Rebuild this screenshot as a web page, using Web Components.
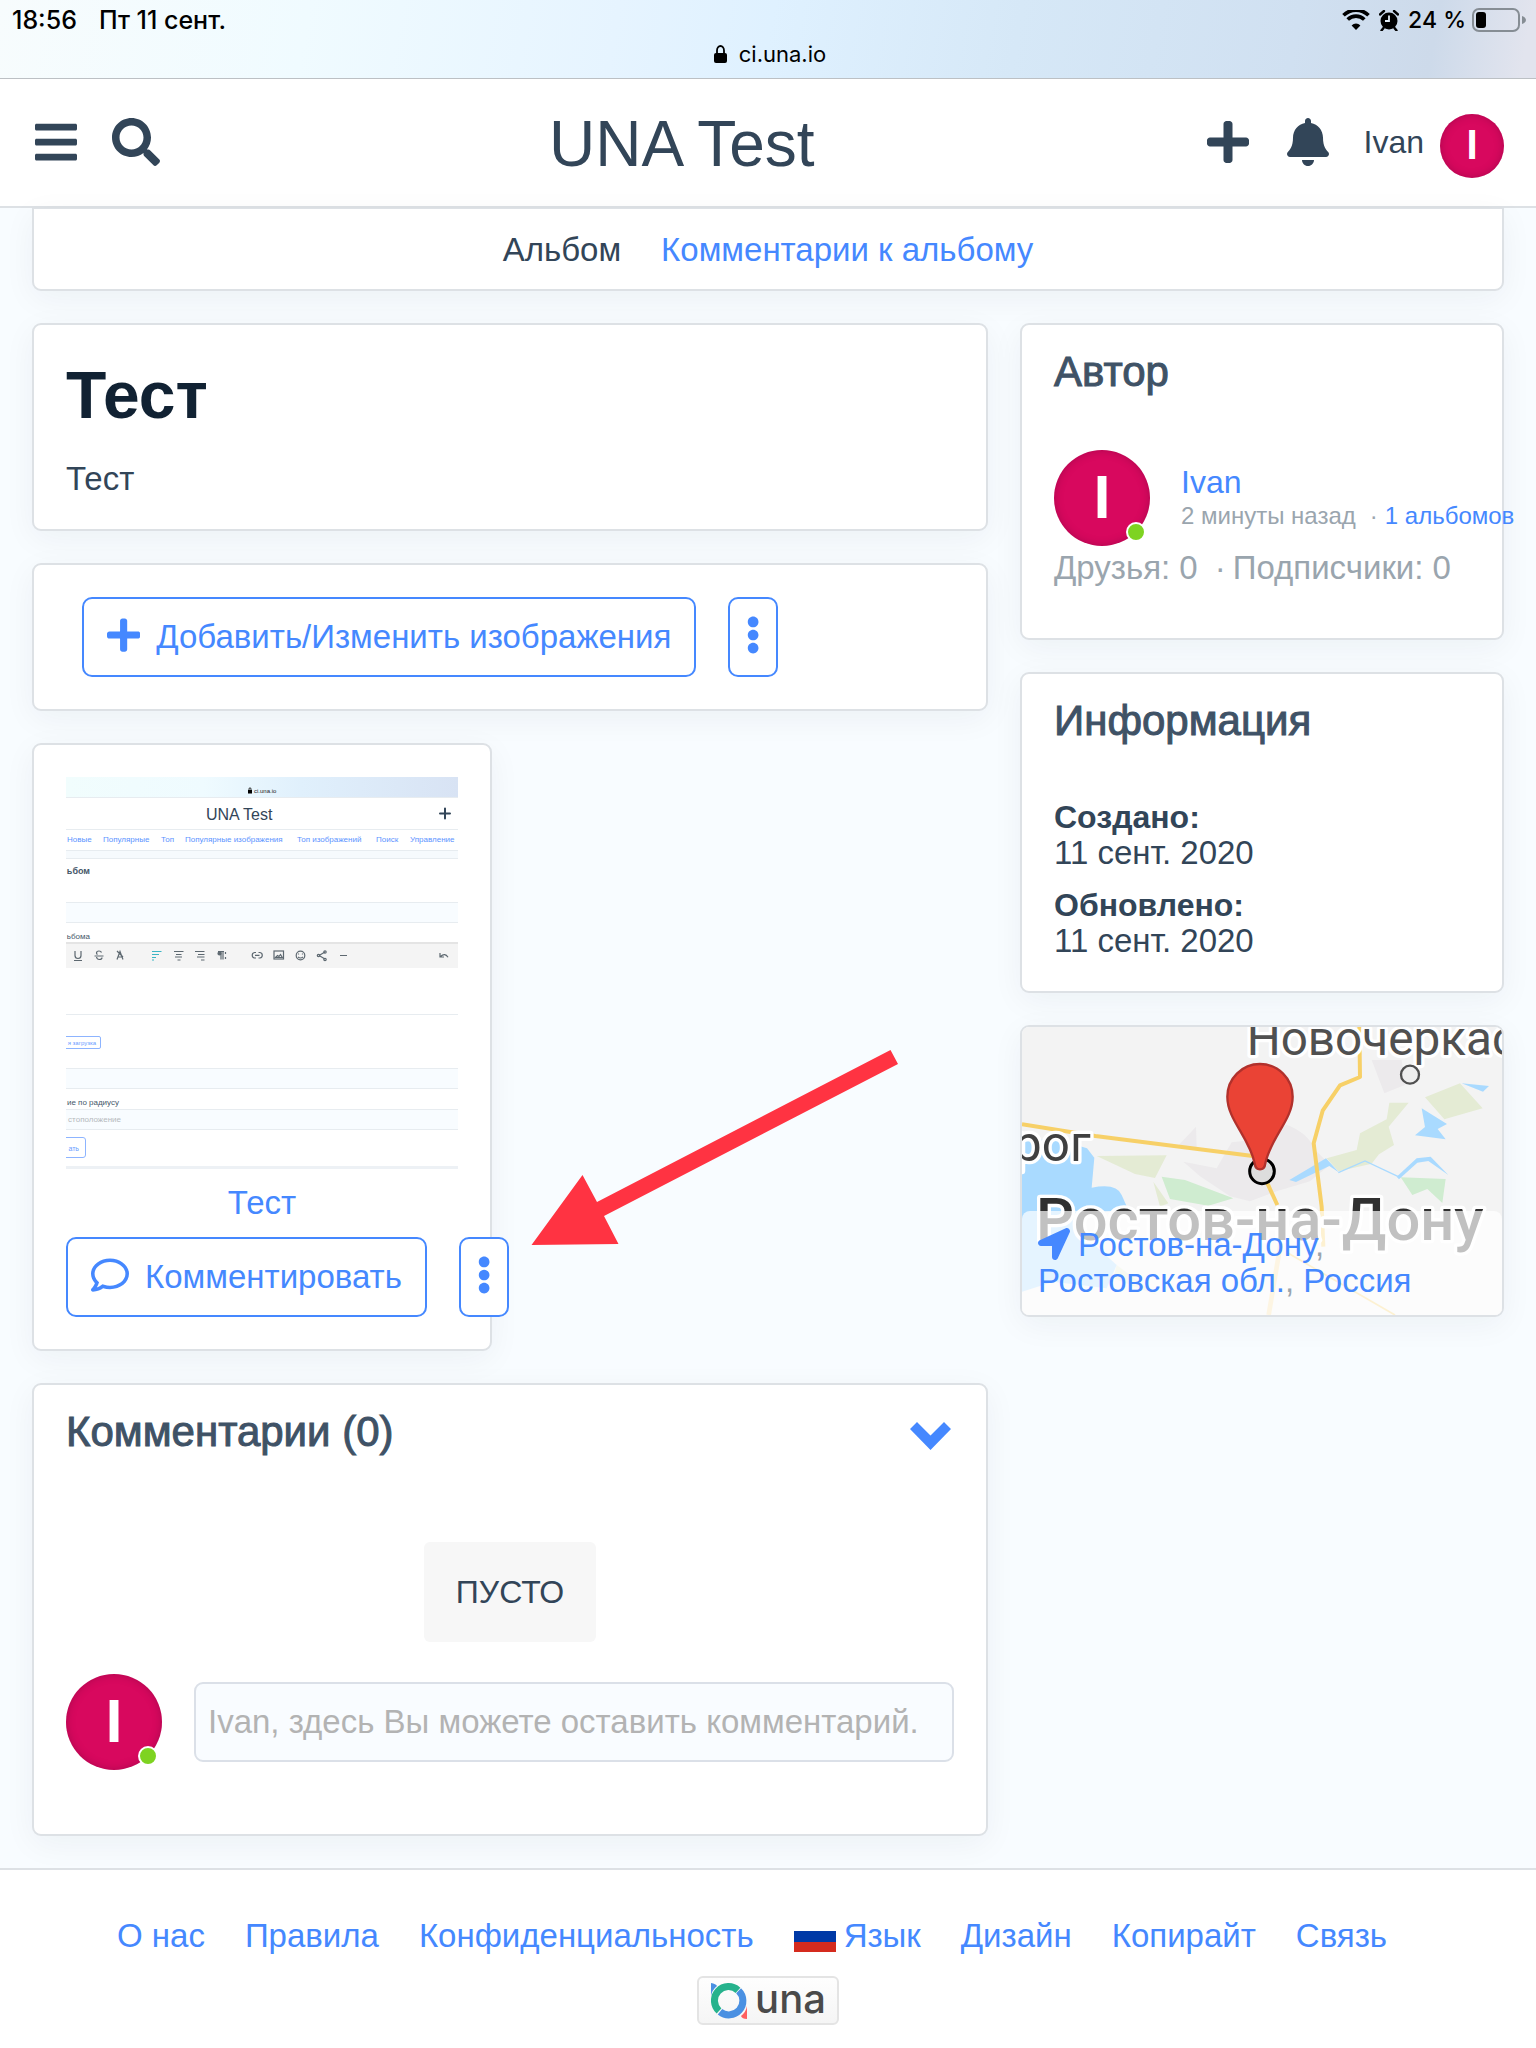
<!DOCTYPE html>
<html lang="ru">
<head>
<meta charset="utf-8">
<meta name="viewport" content="width=device-width, initial-scale=1">
<title>UNA Test</title>
<style>
  :root { --ink: #324558; --ink-strong: #112233; --heading: #3f5266; --muted: #9aa5ae; --link: #4588ff; --line: #dde1e5; }
  html, body { margin: 0; }
  body { min-height: 100vh; display: flex; flex-direction: column; background: #f8fcff; color: var(--ink);
    font: 33px/36px "Liberation Sans", Arial, sans-serif; }
</style>
</head>
<body>
<status-bar></status-bar>
<site-header></site-header>
<album-page></album-page>
<site-footer></site-footer>

<script>
const define = (name, html, setup) => {
  const template = document.createElement('template');
  template.innerHTML = html;
  customElements.define(name, class extends HTMLElement {
    constructor() {
      super();
      this.attachShadow({ mode: 'open' }).append(template.content.cloneNode(true));
    }
    connectedCallback() { if (setup) setup(this, this.shadowRoot); }
  });
};

/* Icons: [viewBox width, path] on a 512 high grid */
const ICONS = {
  bars: [448, 'M16 132h416c8.837 0 16-7.163 16-16V76c0-8.837-7.163-16-16-16H16C7.163 60 0 67.163 0 76v40c0 8.837 7.163 16 16 16zm0 160h416c8.837 0 16-7.163 16-16v-40c0-8.837-7.163-16-16-16H16c-8.837 0-16 7.163-16 16v40c0 8.837 7.163 16 16 16zm0 160h416c8.837 0 16-7.163 16-16v-40c0-8.837-7.163-16-16-16H16c-8.837 0-16 7.163-16 16v40c0 8.837 7.163 16 16 16z'],
  search: [512, 'M505 442.7L405.3 343c-4.5-4.5-10.6-7-17-7H372c27.6-35.3 44-79.7 44-128C416 93.1 322.9 0 208 0S0 93.1 0 208s93.1 208 208 208c48.3 0 92.7-16.4 128-44v16.3c0 6.4 2.5 12.5 7 17l99.7 99.7c9.4 9.4 24.6 9.4 33.9 0l28.3-28.3c9.4-9.4 9.4-24.6.1-34zM208 336c-70.7 0-128-57.2-128-128 0-70.7 57.2-128 128-128 70.7 0 128 57.2 128 128 0 70.7-57.2 128-128 128z'],
  plus: [448, 'M416 208H272V64c0-17.67-14.33-32-32-32h-32c-17.67 0-32 14.33-32 32v144H32c-17.67 0-32 14.33-32 32v32c0 17.67 14.33 32 32 32h144v144c0 17.67 14.33 32 32 32h32c17.67 0 32-14.33 32-32V304h144c17.67 0 32-14.33 32-32v-32c0-17.67-14.33-32-32-32z'],
  bell: [448, 'M224 512c35.32 0 63.97-28.65 63.97-64H160.03c0 35.35 28.65 64 63.97 64zm215.39-149.71c-19.32-20.76-55.47-51.99-55.47-154.29 0-77.7-54.48-139.9-127.94-155.16V32c0-17.67-14.32-32-31.98-32s-31.98 14.33-31.98 32v20.84C118.56 68.1 64.08 130.3 64.08 208c0 102.3-36.15 133.53-55.47 154.29-6 6.45-8.66 14.16-8.61 21.71.11 16.4 12.98 32 32.1 32h383.8c19.12 0 32-15.6 32.1-32 .05-7.55-2.61-15.27-8.61-21.71z'],
  comment: [512, 'M256 32C114.6 32 0 125.1 0 240c0 47.6 19.9 91.2 52.9 126.3C38 405.7 7 439.1 6.5 439.5c-6.6 7-8.4 17.2-4.6 26S14.4 480 24 480c61.5 0 110-25.7 139.1-46.3C192 442.8 223.2 448 256 448c141.4 0 256-93.1 256-208S397.4 32 256 32zm0 368c-26.7 0-53.1-4.1-78.4-12.1l-22.7-7.2-19.5 13.8c-14.3 10.1-33.9 21.4-57.5 29 7.3-12.1 14.4-25.7 19.9-40.2l10.6-28.1-20.6-21.8C69.7 314.1 48 282.2 48 240c0-88.2 93.3-160 208-160s208 71.8 208 160-93.3 160-208 160z'],
  more: [192, 'M96 184c39.8 0 72 32.2 72 72s-32.2 72-72 72-72-32.2-72-72 32.2-72 72-72zM24 80c0 39.8 32.2 72 72 72s72-32.2 72-72S135.8 8 96 8 24 40.2 24 80zm0 352c0 39.8 32.2 72 72 72s72-32.2 72-72-32.2-72-72-72-72 32.2-72 72z'],
  arrow: [512, 'M444.52 3.52L28.74 195.42c-47.97 22.39-31.98 92.75 19.19 92.75h175.91v175.91c0 51.17 70.36 67.17 92.75 19.19l191.9-415.78c15.99-38.38-25.59-79.97-63.97-63.96z']
};

define('una-icon', `
  <style>
    :host { display: inline-flex; height: 38px; flex: none; }
    svg { height: 100%; width: auto; fill: currentColor; display: block; }
  </style>
  <svg aria-hidden="true"><path/></svg>`, (el, root) => {
  const [width, path] = ICONS[el.getAttribute('name')];
  root.querySelector('svg').setAttribute('viewBox', `0 0 ${width} 512`);
  root.querySelector('path').setAttribute('d', path);
});

define('una-avatar', `
  <style>
    :host { display: block; position: relative; width: 96px; height: 96px; flex: none; }
    :host([small]) { width: 64px; height: 64px; }
    .disc { box-sizing: border-box; width: 100%; height: 100%; border-radius: 50%; background: #d8085e; color: #fff;
      box-shadow: inset 0 0 8px rgba(90, 0, 50, .35); display: grid; place-items: center; }
    .disc { font: 700 60px/64px Roboto, sans-serif; }
    :host([small]) .disc { font-size: 40px; line-height: 44px; }
    .dot { display: none; position: absolute; right: 4px; bottom: 4px; width: 16px; height: 16px; border-radius: 50%;
      background: #7ed321; border: 2px solid #fff; }
    :host([online]) .dot { display: block; }
  </style>
  <div class="disc">I</div><i class="dot"></i>`);

define('una-card', `
  <style>
    :host { display: block; background: #fff; border: 2px solid var(--line); border-radius: 9px;
      box-shadow: 0 8px 32px rgba(20, 40, 60, .05); padding: 32px; }
    :host([titled]) { padding-top: 25px; }
    :host([flush]) { padding: 0; overflow: hidden; }
    header { display: none; align-items: center; justify-content: space-between; margin-bottom: 56px; }
    :host([titled]) header { display: flex; }
    h2 { margin: 0; font-size: 42px; line-height: 44px; font-weight: 400; color: var(--heading); -webkit-text-stroke: 1px; }
  </style>
  <header><h2></h2><slot name="tool"></slot></header>
  <slot></slot>`, (el, root) => {
  root.querySelector('h2').textContent = el.getAttribute('titled');
});

define('una-button', `
  <style>
    :host { display: inline-flex; flex: none; }
    button { box-sizing: border-box; height: 80px; padding: 0 23px; display: flex; align-items: center; gap: 16px;
      font: inherit; color: var(--link); background: #fff; border: 2px solid currentColor; border-radius: 10px; white-space: nowrap; }
    una-icon { margin-bottom: 4px; }
    :host([icon="more"]) button { width: 50px; padding: 0; justify-content: center; }
    :host([icon="more"]) slot { display: none; }
  </style>
  <button type="button"><slot></slot></button>`, (el, root) => {
  const name = el.getAttribute('icon');
  const button = root.querySelector('button');
  const icon = document.createElement('una-icon');
  icon.setAttribute('name', name);
  button.prepend(icon);
  if (name === 'more') button.setAttribute('aria-label', 'Ещё');
});

define('status-bar', `
  <style>
    :host { display: flex; flex-direction: column; box-sizing: border-box; height: 79px; border-bottom: 1px solid #bcc0c4; color: #000;
      background: linear-gradient(100deg, #f7fcfd 0%, #f0fbff 20%, #e6f4ff 40%, #dff1ff 50%, #d6e8f7 66%, #d0e0f1 84%, #cddaea 93%, #e2e4ee 99%);
      font: 500 23px/28px Inter, sans-serif; }
    .row { display: flex; align-items: center; padding: 6px 10px 0 12px; height: 28px; }
    .left { display: flex; gap: 22px; flex: 1; font-size: 25px; }
    .right { display: flex; align-items: center; gap: 9px; }
    .pct { display: flex; align-items: center; gap: 6px; }
    .url { display: flex; justify-content: center; align-items: center; gap: 12px; font-size: 22px; font-weight: 400; padding: 6px 0 0 4px; }
    svg { display: block; }
  </style>
  <div class="row">
    <div class="left"><span>18:56</span><span>Пт 11 сент.</span></div>
    <div class="right">
      <svg width="28" height="20" viewBox="0 0 28 20"><path d="M14 20 9.6 15.4a6.300 6.300 0 0 1 8.800 0z"/><path d="M1.500 7.300a17.600 17.600 0 0 1 25 0M5.700 11.600a11.600 11.600 0 0 1 16.600 0" transform="translate(0 -2)" fill="none" stroke="#000" stroke-width="3.600"/></svg>
      <svg width="20" height="21" viewBox="0 0 20 21"><circle cx="10" cy="11" r="8.500"/><path d="M1 4.500 5 1M19 4.500 15 1M4.500 18 2.500 20.500M15.500 18l2 2.500" stroke="#000" stroke-width="2.400" stroke-linecap="round"/><path d="M10 5.500V11H6" fill="none" stroke="#e3edf7" stroke-width="1.800"/></svg>
      <div class="pct"><span>24 %</span>
      <svg width="54" height="24" viewBox="0 0 54 24"><rect x="1" y="1" width="46" height="22" rx="6" fill="none" stroke="#868d94" stroke-width="2"/><rect x="4" y="4" width="10" height="16" rx="3"/><path d="M50 8q4 1.500 4 4t-4 4z" fill="#868d94"/></svg></div>
    </div>
  </div>
  <div class="url">
    <svg width="13" height="18" viewBox="0 0 13 18"><rect y="8" width="13" height="10" rx="2"/><path d="M3 9V5.500a3.500 4.500 0 0 1 7 0V9" fill="none" stroke="#000" stroke-width="1.800"/></svg>
    <span>ci.una.io</span>
  </div>`);

define('site-header', `
  <style>
    :host { display: flex; align-items: center; gap: 32px; box-sizing: border-box; height: 129px; padding: 0 32px 2px; background: #fff; border-bottom: 2px solid var(--line); font-size: 32px; }
    button { width: 48px; height: 48px; padding: 0; border: 0; background: none; color: inherit; display: grid; place-items: center; }
    una-icon { height: 48px; }
    h1 { flex: 1; margin: 0; padding-top: 4px; text-align: center; font-size: 64px; line-height: 72px; font-weight: 400; }
    a { display: flex; align-items: center; gap: 16px; color: inherit; text-decoration: none; }
    una-avatar { margin-top: 8px; }
  </style>
  <button aria-label="Меню"><una-icon name="bars"></una-icon></button>
  <button aria-label="Поиск"><una-icon name="search"></una-icon></button>
  <h1>UNA Test</h1>
  <button aria-label="Добавить"><una-icon name="plus"></una-icon></button>
  <button aria-label="Уведомления"><una-icon name="bell"></una-icon></button>
  <a href="#"><span>Ivan</span><una-avatar small></una-avatar></a>`);

/* Preview of the uploaded photo: an album editing form */
define('album-thumb', `
  <style>
    :host { display: block; }
    svg { display: block; width: 100%; height: auto; font-family: "Liberation Sans", Arial, sans-serif; }
  </style>
  <svg viewBox="0 0 392 392" role="img" aria-label="Тест">
    <defs><linearGradient id="sky"><stop offset="0" stop-color="#f1fdfd"/><stop offset=".35" stop-color="#effbff"/><stop offset=".6" stop-color="#e0f0fc"/><stop offset="1" stop-color="#d8e3f4"/></linearGradient></defs>
    <rect width="392" height="392" fill="#fff"/>
    <rect width="392" height="20" fill="url(#sky)"/>
    <rect x="182" y="13" width="4" height="3.500"/><path d="M183 13v-1a1 1.200 0 0 1 2 0v1" fill="none" stroke="#000" stroke-width=".8"/>
    <text x="188" y="16" font-size="6" fill="#222">ci.una.io</text>
    <text x="140" y="43" font-size="16" fill="#324558">UNA Test</text>
    <path d="M374 36.500h10M379 31.500v10" stroke="#324558" stroke-width="2" stroke-linecap="round"/>
    <g font-size="8" fill="#5b93ff">
      <text x="1" y="65">Новые</text><text x="37" y="65">Популярные</text><text x="95" y="65">Топ</text><text x="119" y="65">Популярные изображения</text><text x="231" y="65">Топ изображений</text><text x="310" y="65">Поиск</text><text x="344" y="65">Управление</text>
    </g>
    <path fill="#f6fafd" d="M0 74h392v8H0z"/><path fill="#f8fcff" d="M0 126h392v19H0zM0 292h392v19H0zM0 333h392v19H0z"/>
    <path d="M0 20.500h392M0 52.500h392M0 73.500h392M0 81.500h392M0 125.500h392M0 145.500h392M0 237.500h392M0 291.500h392M0 311.500h392M0 332.500h392M0 352.500h392" stroke="#e7ecf0"/>
    <path fill="#f4f4f4" d="M0 165h392v26H0z"/><path fill="#e4e4e4" d="M0 165h392v2H0z"/><path fill="#edf1f5" d="M0 389h392v3H0z"/>
    <g font-size="8" fill="#46586a" text-anchor="end">
      <text x="24" y="97" font-size="9" font-weight="700">ьбом</text>
      <text x="24" y="162">ьбома</text>
      <text x="53" y="328">ие по радиусу</text>
      <text x="55" y="345" fill="#b5b9bd">стоположение</text>
      <text x="30" y="268" font-size="6" fill="#6a9dff">я загрузка</text>
      <text x="13" y="374" font-size="7" fill="#6a9dff">ать</text>
    </g>
    <path d="M0 259.500h33q1.500 0 1.500 1.500v9q0 1.500-1.500 1.500H0M0 360.500h17q2.500 0 2.500 2.500v15q0 2.500-2.500 2.500H0" fill="none" stroke="#8db4ff"/>
    <g fill="none" stroke="#5d6870" stroke-width="1.200">
      <path d="M9 174v4.500a3 3 0 0 0 6 0V174M8 183.500h8"/>
      <path d="M28.500 179h9M35.500 175.500q-.5-1.500-2.500-1.500-2.500 0-2.500 2 0 1 1 1.500M30.500 180q.5 2.500 2.800 2.500 2.700 0 2.700-2"/>
      <path d="M51 182.500l3-8 3 8M52 180h4M51 174l6 6"/>
      <path stroke="#3cb5c4" d="M86 174.500h9.500M86 177.500h7M86 180.500h4M86 183h2"/>
      <path d="M108 174.500h9.500M110 177.500h5.500M109 180h7M111.500 183h3M129 174.500h9.500M132 177.500h6.500M131 180h7.500M135 183h3.500"/>
      <path d="M155 174v8.500M157 174v8.500M152 174.500h6M159.500 175v2M159.500 180v2"/><circle cx="153.500" cy="176.500" r="1.500" fill="#5d6870"/>
      <path d="M190 175.500h-1.500a2.800 2.800 0 0 0 0 5.500H190M192.500 175.500h1.500a2.800 2.800 0 0 1 0 5.500h-1.500M189 178.300h4.500"/>
      <rect x="208" y="174" width="9.500" height="8"/><path d="M209.500 180.500l2-2 1.500 1 1.500-2 1.800 3z"/>
      <circle cx="234.500" cy="178.500" r="4.300"/><path d="M232 180q2.500 2 5 0M232.500 176.500v1M236.500 176.500v1"/>
      <path d="M253 178.500l6-3.500M253 178.500l6 3.500"/><circle cx="252.500" cy="178.500" r="1.200"/><circle cx="259" cy="175" r="1.200"/><circle cx="259" cy="182.500" r="1.200"/>
      <path d="M274 178.500h7M374 176v4h4M374.500 179.500q4.500-4 7.500.8"/>
    </g>
  </svg>`);

define('location-map', `
  <style>
    :host { display: flex; flex-direction: column; justify-content: flex-end; position: relative; min-height: 288px; }
    svg { position: absolute; inset: 0; width: 100%; height: 100%; }
    p { position: relative; margin: 0; padding: 16px 14px 16px 16px; background: rgba(255, 255, 255, .7); border-radius: 8px 8px 0 0; color: var(--muted); }
    a { color: var(--link); text-decoration: none; }
    una-icon { height: 32px; margin-right: 8px; vertical-align: -4px; color: var(--link); }
  </style>
  <svg viewBox="36 51 1440 864" preserveAspectRatio="xMidYMid slice" aria-hidden="true">
    <path fill="#f3f3f3" d="M36 51h1440v864H36z"/>
    <g fill="#eceaec">
      <path d="M1085 150h90l10 75-62 25zM500 412l58-62 2 62zM520 455l100 20 45-78 70-8 95-45q65 25 85 75l45 45-60 50-100 30-80 30-60-15-90-60z"/>
    </g>
    <g fill="#e4ebd4">
      <path d="M260 438l210-2-35 68-60-12zM430 515l45 65-25 10zM950 445l90-25 10-50 80-42 8-50h58l-60 72 16 55-45 28-22 28-100 23zM1245 262l105-42 68 75-115 33zM320 765l120 90-130-50z"/>
    </g>
    <g fill="#cfecd0"><path d="M455 500l70 10 145 55-75 22-115-20zM1172 502l135 5-10 72-45-42-45 18z"/></g>
    <g fill="#a9daff">
      <path d="M36 395l95-10 100 30 22 28-8 90q75-15 90 22l20 45-120 10-20 60 105 95-30 70-160-20-94 30z"/>
      <path d="M838 510l110-65 40 43-30-20-100 48zM1355 220l82 8-18 17zM1235 295l76 47-28 15 24 31-92-12 30-25zM1160 500l60-55 42-5 53 55-60-42-33 5-55 50z"/>
    </g>
    <path d="M985 488l80-35 100 47" fill="none" stroke="#a9daff" stroke-width="4"/>
    <g fill="none" stroke="#f7d067" stroke-linejoin="round">
      <path d="M36 343l220 35 490 62" stroke-width="12"/><path d="M1048 51l2 150-60 25-52 76-27 98 24 190 5 120M770 515l32 70" stroke-width="12"/>
      <path d="M812 700l-36 215" stroke-width="14" stroke="#f9dda0"/><path d="M835 730l320 185" stroke-width="5"/>
    </g>
    <g font-family="Roboto, sans-serif" fill="#505050" stroke="#fff" stroke-width="20" paint-order="stroke" stroke-linejoin="round">
      <text x="710" y="134" font-size="143">Новочеркасск</text>
      <text x="242" y="452" font-size="148" text-anchor="end" fill="#404040">рог</text>
      <text x="78" y="690" font-size="179" font-weight="500" fill="#303030">Ростов-на-Дону</text>
    </g>
    <circle cx="1200" cy="194" r="27" fill="#eee" stroke="#505050" stroke-width="7"/>
    <circle cx="756" cy="484" r="37" fill="#ddd" stroke="#000" stroke-width="9"/>
    <path d="M750 162a98 98 0 0 1 98 98c0 70-65 120-82 200q-2 18-16 18t-16-18c-17-80-82-130-82-200a98 98 0 0 1 98-98z" fill="#ea4335" stroke="#b1312c" stroke-width="7"/>
  </svg>
  <p><una-icon name="arrow"></una-icon><a href="#">Ростов-на-Дону</a>, <a href="#">Ростовская обл.</a>, <a href="#">Россия</a></p>`);

define('album-page', `
  <style>
    :host { display: block; padding: 0 32px 32px; }
    a { color: var(--link); text-decoration: none; }
    nav { display: flex; justify-content: center; gap: 40px; padding: 23px 0 21px; background: #fff; border: 2px solid var(--line); border-top-width: 1px;
      border-radius: 0 0 9px 9px; box-shadow: 0 8px 32px rgba(20, 40, 60, .05); margin-bottom: 32px; }
    .grid { display: grid; grid-template-columns: minmax(0, 239fr) minmax(0, 121fr); gap: 32px; align-items: start; }
    .col { display: flex; flex-direction: column; gap: 32px; }
    h1 { margin: 0 0 28px; font-size: 66px; line-height: 76px; color: var(--ink-strong); }
    p { margin: 0; }
    .actions { display: flex; gap: 32px; }
    .indent { padding-left: 16px; }
    .photo { position: relative; align-self: start; box-sizing: border-box; width: 460px; display: flex; flex-direction: column; gap: 16px; }
    .caption { text-align: center; }
    .pointer { position: absolute; left: 497px; top: 305px; width: 368px; height: 196px; fill: #ff3342; }
    .chevron { margin-right: 3px; padding: 8px 0 0; border: 0; background: none; color: var(--link); display: block; }
    .chevron svg { display: block; fill: currentColor; }
    .empty { display: flex; justify-content: center; padding: 32px 0; font-size: 32px; }
    .empty span { padding: 32px; background: #f7f7f7; border-radius: 6px; }
    .reply { display: flex; align-items: center; gap: 32px; margin-bottom: 32px; }
    input { flex: 1; min-width: 0; box-sizing: border-box; height: 80px; padding: 0 12px; font: inherit; color: var(--ink); background: #f9fcff;
      border: 2px solid #dbe0e8; border-radius: 9px; }
    input::placeholder { color: #b3b3b3; opacity: 1; }
    .author { display: flex; align-items: center; gap: 31px; margin-bottom: 4px; white-space: nowrap; font-size: 32px; }
    .author small { display: block; font-size: 24px; line-height: 32px; color: var(--muted); }
    .sep { margin: 0 7px 0 17px; }
    .author .sep { margin-left: 14px; }
    .stats { color: var(--muted); padding-bottom: 20px; white-space: nowrap; }
    dl { margin: 0; }
    dt { font-weight: 700; font-size: 32px; }
    dd { margin: 0 0 16px; }
    dd:last-child { margin: 0; }
  </style>
  <nav><span>Альбом</span><a href="#">Комментарии к альбому</a></nav>
  <div class="grid">
    <main class="col">
      <una-card><h1>Тест</h1><p>Тест</p></una-card>
      <una-card><div class="actions indent"><una-button icon="plus">Добавить/Изменить изображения</una-button><una-button icon="more"></una-button></div></una-card>
      <una-card class="photo">
        <album-thumb></album-thumb>
        <a class="caption" href="#">Тест</a>
        <div class="actions"><una-button icon="comment">Комментировать</una-button><una-button icon="more"></una-button></div>
        <svg class="pointer" viewBox="0 0 368 196" aria-hidden="true"><path d="M.5 195 51.500 125 66 152 359.500 0 367 14 73 166 87.500 194z"/></svg>
      </una-card>
      <una-card titled="Комментарии (0)">
        <button class="chevron" slot="tool" aria-label="Свернуть"><svg width="41" height="28" viewBox="0 0 41 28"><path d="M7 0 20.500 13.500 34 0 41 7 20.500 28 0 7z"/></svg></button>
        <div class="empty"><span>ПУСТО</span></div>
        <div class="reply"><una-avatar online></una-avatar><input type="text" aria-label="Комментарий" placeholder="Ivan, здесь Вы можете оставить комментарий."></div>
      </una-card>
    </main>
    <aside class="col">
      <una-card titled="Автор">
        <div class="author"><una-avatar online></una-avatar><div><a href="#">Ivan</a><small>2 минуты назад<span class="sep">·</span><a href="#">1 альбомов</a></small></div></div>
        <p class="stats">Друзья: 0<span class="sep">·</span>Подписчики: 0</p>
      </una-card>
      <una-card titled="Информация"><dl><dt>Создано:</dt><dd>11 сент. 2020</dd><dt>Обновлено:</dt><dd>11 сент. 2020</dd></dl></una-card>
      <una-card flush><location-map></location-map></una-card>
    </aside>
  </div>`);

define('site-footer', `
  <style>
    :host { flex: 1; display: flex; flex-direction: column; align-items: center; gap: 22px; padding: 48px 32px 22px; background: #fff; border-top: 2px solid var(--line); }
    nav { display: flex; justify-content: center; gap: 40px; padding-right: 32px; }
    a { color: var(--link); text-decoration: none; }
    .lang { display: flex; align-items: center; gap: 8px; }
    .badge { box-sizing: border-box; height: 49px; padding: 0 11px 0 12px; display: flex; align-items: center; gap: 8px; color: #4a4a4a; background: linear-gradient(#fefefe, #f5f5f5);
      border: 2px solid #e4e4e4; border-radius: 6px; font: 500 40px/40px Inter, sans-serif; }
    .badge span { padding-bottom: 4px; }
    svg { display: block; }
  </style>
  <nav>
    <a href="#">О нас</a><a href="#">Правила</a><a href="#">Конфиденциальность</a>
    <a class="lang" href="#"><svg width="42" height="32" viewBox="0 0 42 32"><path fill="#fff" d="M0 0h42v11H0z"/><path fill="#0039a6" d="M0 11h42v11H0z"/><path fill="#d52b1e" d="M0 22h42v10H0z"/></svg>Язык</a>
    <a href="#">Дизайн</a><a href="#">Копирайт</a><a href="#">Связь</a>
  </nav>
  <a class="badge" href="#"><svg width="36" height="36" viewBox="0 0 36 36"><path fill="#4a90e2" d="M0 0q5 1 6 3Q1 7 0 13z"/><path fill="#ff6060" d="M36 36q-5 0-6-3 5-4 6-10z"/><g fill="none" stroke-width="7"><path stroke="#27b38d" d="M27 7.300A14 14 0 1 0 8 28"/><path stroke="#4a90e2" d="M27.600 7.800A14 14 0 0 1 9 28.700"/></g></svg><span>una</span></a>`);
</script>
</body>
</html>
